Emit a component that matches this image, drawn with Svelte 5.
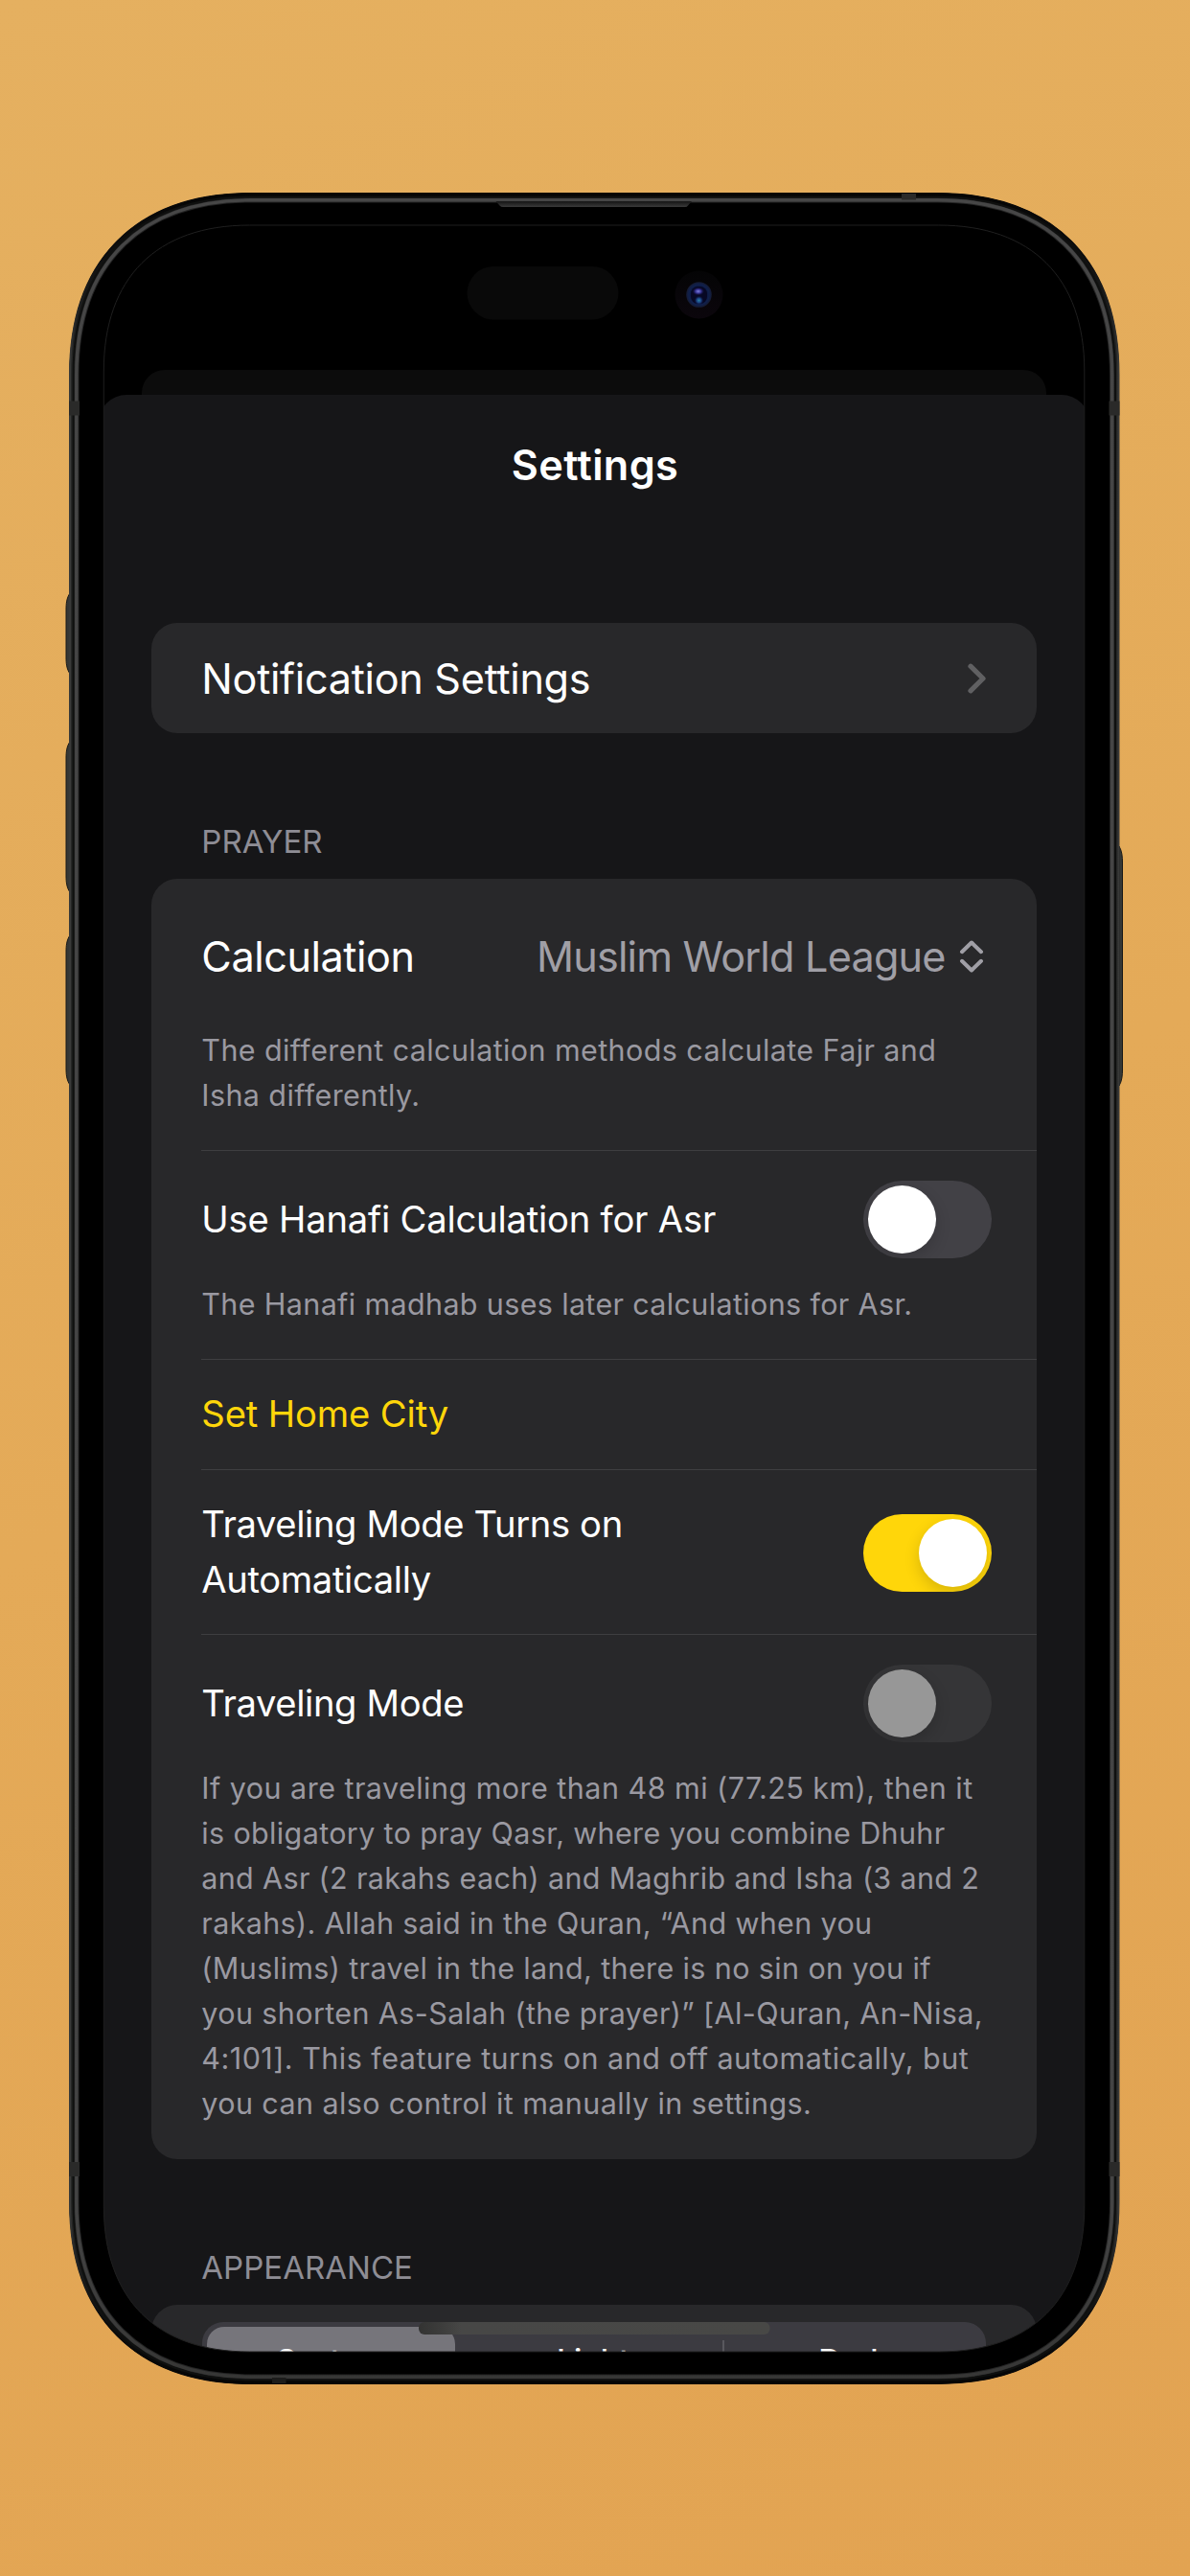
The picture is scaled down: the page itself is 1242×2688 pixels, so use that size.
<script>
  // Outline of the phone body, inset by d pixels, with continuous-curvature corners.
  function outline(d) {
    const l = 72 + d, t = 201 + d, r = 1168.5 - d, b = 2488 - d;
    const R = 190 - d, c = 70 - 0.448 * d;
    return `M${l} ${t + R}C${l} ${t + c} ${l + c} ${t} ${l + R} ${t}H${r - R}` +
      `C${r - c} ${t} ${r} ${t + c} ${r} ${t + R}V${b - R}` +
      `C${r} ${b - c} ${r - c} ${b} ${r - R} ${b}H${l + R}` +
      `C${l + c} ${b} ${l} ${b - c} ${l} ${b - R}Z`;
  }

  // The display opening is slightly asymmetric against the body.
  function display() {
    const l = 108.3, t = 235, r = 1131.8, b = 2454, R = 152, c = 55;
    return `M${l} ${t + R}C${l} ${t + c} ${l + c} ${t} ${l + R} ${t}H${r - R}` +
      `C${r - c} ${t} ${r} ${t + c} ${r} ${t + R}V${b - R}` +
      `C${r} ${b - c} ${r - c} ${b} ${r - R} ${b}H${l + R}` +
      `C${l + c} ${b} ${l} ${b - c} ${l} ${b - R}Z`;
  }

  const bezel = outline(0.5) + display();

  // Lines with many digits are tracked a little wider.
  const travelNote = [
    { text: 'If you are traveling more than 48 mi (77.25 km), then it', tracking: 0.47 },
    { text: 'is obligatory to pray Qasr, where you combine Dhuhr', tracking: 0.36 },
    { text: 'and Asr (2 rakahs each) and Maghrib and Isha (3 and 2', tracking: 0.34 },
    { text: 'rakahs). Allah said in the Quran, “And when you', tracking: 0.36 },
    { text: '(Muslims) travel in the land, there is no sin on you if', tracking: 0.38 },
    { text: 'you shorten As-Salah (the prayer)” [Al-Quran, An-Nisa,', tracking: 0.39 },
    { text: '4:101]. This feature turns on and off automatically, but', tracking: 0.48 },
    { text: 'you can also control it manually in settings.', tracking: 0.4 }
  ];
  const methodNote = [
    { text: 'The different calculation methods calculate Fajr and', tracking: 0.4 },
    { text: 'Isha differently.', tracking: 0.4 }
  ];
  const hanafiNote = [
    { text: 'The Hanafi madhab uses later calculations for Asr.', tracking: 0.35 }
  ];

  let hanafi = $state(false);
  let autoTravel = $state(true);
</script>

{#snippet toggle(on, disabled, onclick, label)}
  <button class="toggle" class:on class:disabled {disabled} {onclick} role="switch" aria-checked={on} aria-label={label}>
    <span class="knob"></span>
  </button>
{/snippet}

{#snippet note(lines)}
  <p>
    {#each lines as line}
      <span style:letter-spacing="{line.tracking}px">{line.text}</span>
    {/each}
  </p>
{/snippet}

<div class="stage">
  <main class="screen">
    <div class="sheet-behind"></div>
    <div class="sheet">
      <h1>Settings</h1>

      <section class="card link-card">
        <span class="title notif">Notification Settings</span>
        <svg class="chevron" width="22" height="34" viewBox="0 0 22 34">
          <path d="M5 4.200L18 17L5 29.800" />
        </svg>
      </section>

      <h2>PRAYER</h2>
      <section class="card">
        <div class="row method">
          <div class="line">
            <span class="title calc">Calculation</span>
            <span class="value">
              <span class="title league">Muslim World League</span>
              <svg class="updown" width="26" height="36" viewBox="0 0 26 36">
                <path d="M3 13.200L13 3.500L23 13.200M3 22.800L13 32.500L23 22.800" />
              </svg>
            </span>
          </div>
          {@render note(methodNote)}
        </div>

        <div class="row">
          <div class="line">
            <span class="label">Use Hanafi Calculation for Asr</span>
            {@render toggle(hanafi, false, () => (hanafi = !hanafi), 'Use Hanafi Calculation for Asr')}
          </div>
          {@render note(hanafiNote)}
        </div>

        <div class="row city">
          <span class="label accent">Set Home City</span>
        </div>

        <div class="row auto">
          <div class="line">
            <span class="label travel">Traveling Mode Turns on<br />Automatically</span>
            {@render toggle(autoTravel, false, () => (autoTravel = !autoTravel), 'Traveling Mode Turns on Automatically')}
          </div>
        </div>

        <div class="row manual">
          <div class="line">
            <span class="label travel">Traveling Mode</span>
            {@render toggle(false, true, undefined, 'Traveling Mode')}
          </div>
          {@render note(travelNote)}
        </div>
      </section>

      <h2>APPEARANCE</h2>
      <section class="card appearance">
        <div class="segments">
          <span class="segment selected">System</span>
          <span class="segment middle">Light</span>
          <span class="divider"></span>
          <span class="segment">Dark</span>
        </div>
      </section>
    </div>
  </main>

  <svg class="frame" width="1242" height="2688" viewBox="0 0 1242 2688">
    <defs>
      <linearGradient id="edge" x1="0" y1="201" x2="0" y2="2488" gradientUnits="userSpaceOnUse">
        <stop offset="0" stop-color="#040404" />
        <stop offset="0.08" stop-color="#262726" />
        <stop offset="0.92" stop-color="#262726" />
        <stop offset="1" stop-color="#040404" />
      </linearGradient>
      <linearGradient id="rim" x1="0" y1="201" x2="0" y2="2488" gradientUnits="userSpaceOnUse">
        <stop offset="0" stop-color="#060606" />
        <stop offset="0.03" stop-color="#0e0e0e" />
        <stop offset="0.08" stop-color="#393a39" />
        <stop offset="0.92" stop-color="#393a39" />
        <stop offset="0.97" stop-color="#0c0c0c" />
        <stop offset="1" stop-color="#060606" />
      </linearGradient>
      <linearGradient id="band" x1="0" y1="201" x2="0" y2="2488" gradientUnits="userSpaceOnUse">
        <stop offset="0" stop-color="#464646" />
        <stop offset="0.92" stop-color="#444444" />
        <stop offset="1" stop-color="#363635" />
      </linearGradient>
      <linearGradient id="home" x1="0" x2="1">
        <stop offset="0" stop-color="#333332" />
        <stop offset="0.06" stop-color="#3c3c3b" />
        <stop offset="0.12" stop-color="#474746" />
        <stop offset="1" stop-color="#484846" />
      </linearGradient>
      <linearGradient id="speaker" x1="0" y1="0" x2="0" y2="1">
        <stop offset="0" stop-color="#151515" />
        <stop offset="1" stop-color="#3a3a3a" />
      </linearGradient>
      <radialGradient id="ring">
        <stop offset="0.5" stop-color="#0a1236" />
        <stop offset="0.8" stop-color="#10204c" />
        <stop offset="1" stop-color="#151a30" />
      </radialGradient>
      <radialGradient id="glint">
        <stop offset="0" stop-color="#8080e0" />
        <stop offset="0.5" stop-color="#322e8c" />
        <stop offset="1" stop-color="#0c0a2c" stop-opacity="0" />
      </radialGradient>
      <radialGradient id="glow">
        <stop offset="0" stop-color="#2a80a4" />
        <stop offset="0.5" stop-color="#193f80" />
        <stop offset="1" stop-color="#0a0f38" stop-opacity="0" />
      </radialGradient>
      <linearGradient id="lens" x1="0" y1="0" x2="0" y2="1">
        <stop offset="0" stop-color="#040405" />
        <stop offset="1" stop-color="#0b060c" />
      </linearGradient>
    </defs>

    <!-- side buttons -->
    <g fill="#353735" stroke="#161716" stroke-width="1">
      <path d="M73 619C69.500 624 69 630 69 636V686C69 692 69.500 698 73 703Z" />
      <path d="M73 774C69.500 779 69 785 69 791V914C69 920 69.500 926 73 931Z" />
      <path d="M73 976C69.500 981 69 987 69 993V1115C69 1121 69.500 1127 73 1132Z" />
      <path d="M1168 883C1171 888 1171.500 894 1171.500 900V1116C1171.500 1122 1171 1128 1168 1133Z" />
    </g>

    <path d={bezel} fill="#000" fill-rule="evenodd" />
    <path d={outline(3)} fill="none" stroke="url(#edge)" stroke-width="5" />
    <path d={outline(1)} fill="none" stroke="url(#rim)" stroke-width="2" />
    <path d={outline(4.5)} fill="none" stroke="#0f100f" stroke-width="2" />
    <path d={outline(8)} fill="none" stroke="#242424" stroke-width="5" />
    <path d={outline(7.8)} fill="none" stroke="url(#band)" stroke-width="3.400" />
    <path d={display()} fill="none" stroke="#1f1f1f" stroke-width="1" />

    <!-- antenna bands -->
    <g fill="#2a2a29">
      <rect x="72" y="418.500" width="11" height="15" />
      <rect x="1157.500" y="418.500" width="11" height="15" />
      <rect x="72" y="2256" width="11" height="15" />
      <rect x="1157.500" y="2256" width="11" height="15" />
      <rect x="941" y="202" width="15" height="6.500" />
      <rect x="284" y="2481" width="14.500" height="6" fill="#1c1c1b" />
    </g>

    <path d="M517.500 210H722L718 214.500Q717 216 715 216H525Q523 216 521.500 214.500Z" fill="url(#speaker)" />

    <!-- sensor cut-out and camera -->
    <rect x="487.500" y="278" width="158" height="55.500" rx="27.750" fill="#090909" />
    <circle cx="729.500" cy="307.500" r="25" fill="url(#lens)" />
    <circle cx="729.500" cy="307.500" r="13.300" fill="url(#ring)" />
    <rect x="721" y="299" width="17" height="18" rx="7.500" fill="#070824" />
    <ellipse cx="728.800" cy="304" rx="6.500" ry="4.500" fill="url(#glint)" />
    <circle cx="729.500" cy="313.500" r="5" fill="url(#glow)" />

    <rect x="437" y="2423" width="366.500" height="13" rx="6" fill="url(#home)" />
  </svg>
</div>

<style>
  :global(body) {
    margin: 0;
  }

  .stage {
    position: relative;
    box-sizing: border-box;
    width: 1242px;
    height: 2688px;
    padding: 235px 110px 0 108px;
    overflow: hidden;
    background: linear-gradient(155deg, #e5b060, #e4aa58 50%, #e2a352);
    font-family: Inter, 'Liberation Sans', sans-serif;
    color: #fff;
  }

  .screen {
    box-sizing: border-box;
    width: 1024px;
    height: 2219px;
    padding-top: 151px;
    overflow: hidden;
    border-radius: 130px;
    background: #000;
  }

  .sheet-behind {
    height: 26px;
    margin: 0 40px;
    border-radius: 24px 24px 0 0;
    background: #0c0c0c;
  }

  .sheet {
    box-sizing: border-box;
    height: 2050px;
    margin: 0 -5px;
    padding: 0 55.300px;
    border-radius: 29px 29px 0 0;
    background: #161618;
  }

  h1 {
    margin: 0 0 92px;
    padding-left: 2px;
    font-size: 43.200px;
    font-weight: 600;
    line-height: 146px;
    letter-spacing: 0.400px;
    text-align: center;
  }

  h2 {
    margin: 0;
    padding: 93px 52px 19px;
    font-size: 33px;
    font-weight: 400;
    line-height: 40px;
    letter-spacing: 0.030px;
    color: #8e8d95;
  }

  .card {
    border-radius: 27px;
    background: #28282a;
  }

  .link-card {
    display: flex;
    align-items: center;
    justify-content: space-between;
    height: 115px;
    padding: 0 52px;
  }

  .title {
    font-size: 43.200px;
    line-height: 60px;
    white-space: nowrap;
  }

  .notif {
    letter-spacing: -0.300px;
  }

  .calc {
    letter-spacing: -0.446px;
  }

  .league {
    letter-spacing: -0.800px;
  }

  .chevron path,
  .updown path {
    fill: none;
    stroke-linecap: round;
    stroke-linejoin: round;
  }

  .chevron path {
    stroke: #606062;
    stroke-width: 5.200;
  }

  .updown path {
    stroke: #a09fa6;
    stroke-width: 4;
  }

  .row {
    padding: 31px 47px 34px 0;
    margin-left: 52px;
    border-top: 1px solid #3e3e40;
  }

  .row:first-child {
    border-top: 0;
  }

  .line {
    display: flex;
    align-items: center;
    justify-content: space-between;
  }

  .row p {
    display: flex;
    flex-direction: column;
    margin: 24px 0 0;
    font-size: 30.500px;
    line-height: 47px;
    white-space: nowrap;
    color: #9a99a1;
  }

  .method {
    padding-top: 51px;
  }

  .method p {
    margin-top: 44px;
  }

  .value {
    display: flex;
    align-items: center;
    gap: 14px;
    margin-right: 8px;
    color: #a09fa6;
  }

  .label {
    font-size: 38.200px;
    line-height: 57.500px;
    letter-spacing: -0.210px;
    white-space: nowrap;
  }

  .travel {
    letter-spacing: -0.370px;
  }

  .accent {
    letter-spacing: -0.134px;
    color: #ffd60a;
  }

  .city {
    display: flex;
    padding: 28px 0 28.500px;
  }

  .auto {
    padding-top: 28px;
    padding-bottom: 28px;
  }

  .auto .toggle {
    margin-top: 1px;
  }

  .manual {
    padding-bottom: 35px;
  }

  .toggle {
    display: flex;
    box-sizing: border-box;
    width: 134px;
    height: 81px;
    padding: 5px;
    border: 0;
    border-radius: 40.500px;
    background: #424146;
    overflow: hidden;
  }

  .knob {
    width: 71px;
    height: 71px;
    border-radius: 50%;
    background: #fff;
    box-shadow: 0 6px 16px rgba(0, 0, 0, 0.16);
  }

  .on {
    justify-content: flex-end;
    background: #ffd60a;
  }

  .disabled {
    background: #353537;
  }

  .disabled .knob {
    background: #979797;
  }

  .appearance {
    padding: 17.500px 52.500px 0;
    height: 180px;
  }

  .segments {
    display: flex;
    box-sizing: border-box;
    height: 84px;
    padding: 5px;
    border-radius: 22px;
    background: #3c3b41;
  }

  .segment {
    flex: 1;
    font-size: 33px;
    font-weight: 500;
    line-height: 71px;
    letter-spacing: -0.600px;
    text-align: center;
  }

  .selected {
    flex: 0 0 259px;
    border-radius: 18px;
    background: #76757b;
  }

  .middle {
    box-sizing: border-box;
    flex: 0 0 279px;
    padding-left: 9px;
  }

  .divider {
    width: 2.500px;
    height: 46px;
    margin-top: 14px;
    background: #59585e;
  }

  .frame {
    position: absolute;
    inset: 0;
    pointer-events: none;
  }
</style>
